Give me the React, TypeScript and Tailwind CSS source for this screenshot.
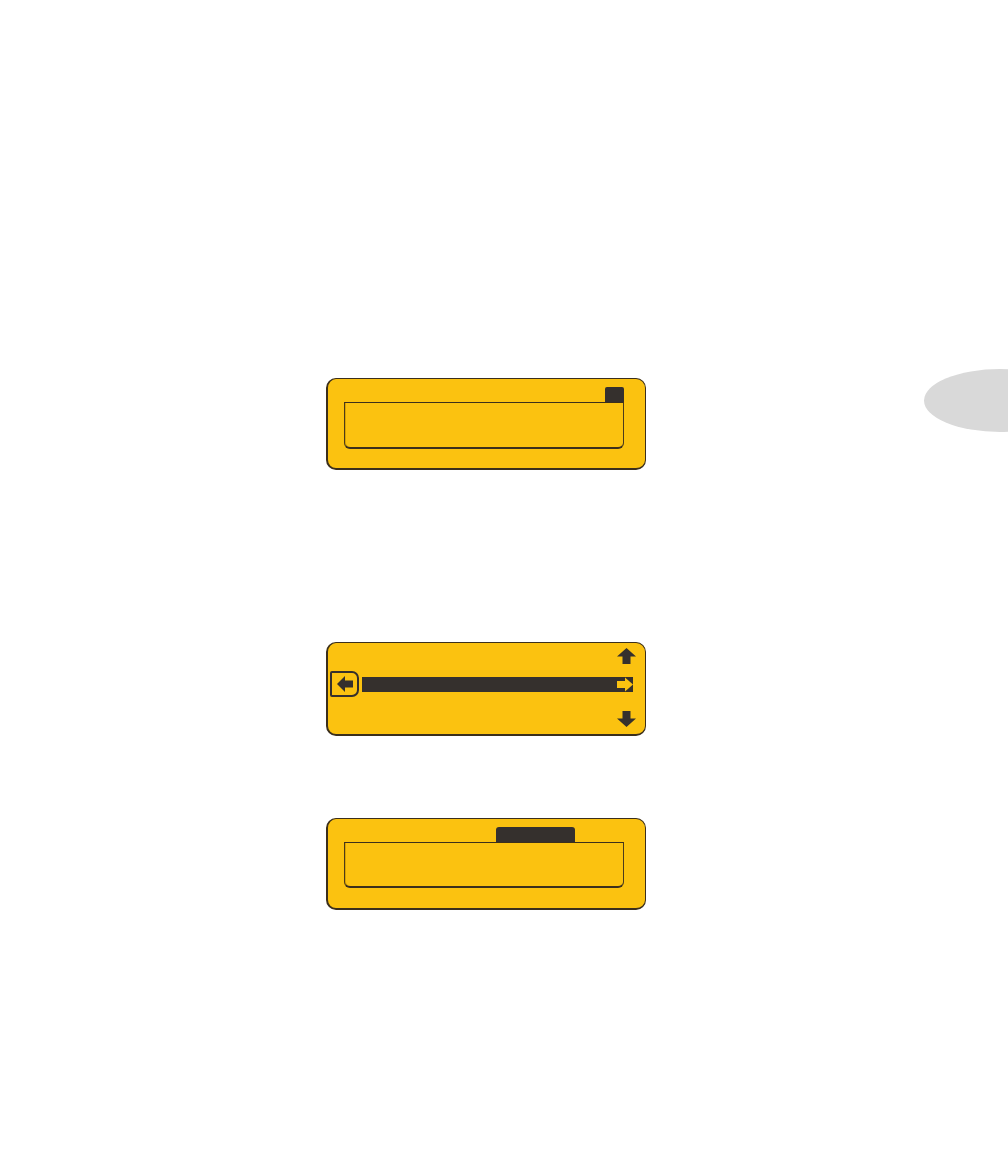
import React from "react";

const Y = "bg-[#fbc210]";

function Panel({ children, className = "" }: { children: React.ReactNode; className?: string }) {
  return (
    <div
      className={`${Y} ml-[326px] w-[320px] rounded-[10px] border-[1.5px] border-l-2 border-b-2 border-[#3b2f1c] ${className}`}
    >
      {children}
    </div>
  );
}

function Well({ h }: { h: string }) {
  return (
    <div
      className={`w-full ${h} rounded-b-[6px] border-x border-t border-b-2 border-l-[1.5px] border-x-[#4a3a1c] border-t-[#3b2f1c] border-b-[#3b2f1c] shadow-[inset_1px_0_0_#d9a200]`}
    />
  );
}

function UpArrow() {
  return (
    <svg width="19" height="16" viewBox="0 0 19 16">
      <polygon points="9.5,0 19,8.5 13.5,8.5 13.5,16 5.5,16 5.5,8.5 0,8.5" fill="#35302d" />
    </svg>
  );
}

function DownArrow() {
  return (
    <svg width="19" height="16" viewBox="0 0 19 16">
      <polygon points="9.5,16 19,7.5 13.5,7.5 13.5,0 5.5,0 5.5,7.5 0,7.5" fill="#35302d" />
    </svg>
  );
}

export default function App() {
  return (
    <div className="w-[1008px] h-[1152px] bg-white overflow-hidden">
      {/* first display + chapter tab */}
      <div className="flex items-start pt-[369px]">
        <Panel className="mt-[9px] h-[92px] pt-[7.5px] pl-[16px] pr-[21.5px]">
          <div className="flex flex-col items-end">
            <div className="w-[19px] h-[15px] rounded-t-[2px] bg-[#35302d]" />
            <Well h="h-[47px]" />
          </div>
        </Panel>
        <div className="ml-auto mr-[-68px] w-[152px] h-[63px] rounded-[50%] bg-[#d9d9d9]" />
      </div>

      {/* list display */}
      <Panel className="mt-[172px] h-[94px] flex flex-col pt-[4.5px] pr-[9.5px]">
        <div className="flex justify-end">
          <UpArrow />
        </div>
        <div className="flex items-center mt-[7.5px] pl-[2px]">
          <div className="w-[29px] h-[26px] border-[2.5px] border-[#35302d] rounded-r-[7px] rounded-l-[2px] flex items-center justify-center pl-[1px]">
            <svg width="16" height="16" viewBox="0 0 16 16">
              <polygon points="0,8 8,0 8,4.5 16,4.5 16,11.5 8,11.5 8,16" fill="#35302d" />
            </svg>
          </div>
          <div className="ml-[3px] flex-1 h-[15px] mr-[2.5px] bg-[#35302d] flex justify-end items-center">
            <svg width="16" height="15" viewBox="0 0 16 15">
              <polygon points="0,4 8,4 8,0.5 16,7.5 8,14.5 8,11 0,11" fill="#fbc210" />
            </svg>
          </div>
        </div>
        <div className="flex justify-end mt-[14px]">
          <DownArrow />
        </div>
      </Panel>

      {/* tabbed display */}
      <Panel className="mt-[82px] h-[92px] pt-[7.5px] pl-[16px] pr-[21.5px]">
        <div className="flex flex-col">
          <div className="ml-[152px] w-[79px] h-[15px] rounded-t-[3px] bg-[#35302d]" />
          <Well h="h-[46px]" />
        </div>
      </Panel>
    </div>
  );
}
